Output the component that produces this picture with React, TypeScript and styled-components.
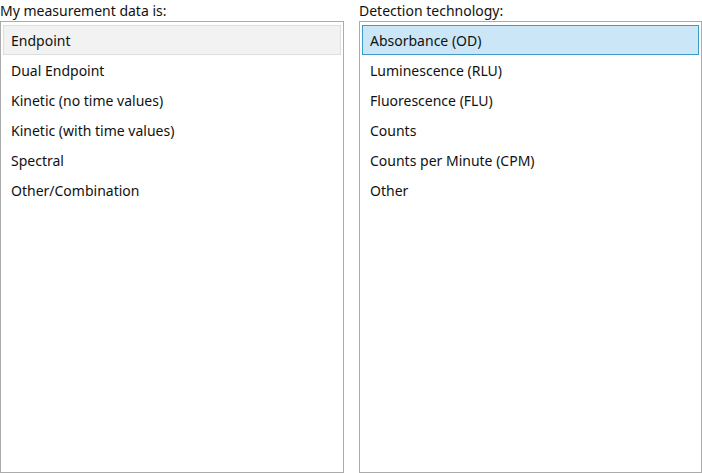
import React from "react";
import styled, { createGlobalStyle } from "styled-components";

const Global = createGlobalStyle`
  html, body { margin: 0; padding: 0; background: #ffffff; }
  body { font-family: "Noto Sans", "Open Sans", "DejaVu Sans", sans-serif; }
`;

const Page = styled.div`
  width: 702px;
  height: 473px;
  display: grid;
  grid-template-columns: 344px 343px;
  column-gap: 15px;
  overflow: hidden;
`;

const Column = styled.div`
  display: flex;
  flex-direction: column;
  min-height: 0;
`;

const Label = styled.div`
  height: 29px;
  margin-top: -8px;
  display: flex;
  align-items: flex-end;
  font-size: 14px;
  line-height: 21px;
  color: #111111;
  white-space: nowrap;
`;

const ListBox = styled.div`
  flex: 1;
  border: 1px solid #ababab;
  background: #ffffff;
  padding: 3px 2px;
  display: flex;
  flex-direction: column;
`;

const Item = styled.div<{ $sel?: "gray" | "blue" }>`
  height: 30px;
  box-sizing: border-box;
  display: flex;
  align-items: center;
  padding-left: 7px;
  font-size: 14px;
  color: #111111;
  border: 1px solid
    ${(p) => (p.$sel === "blue" ? "#3d9bc8" : p.$sel === "gray" ? "#dedede" : "transparent")};
  background: ${(p) => (p.$sel === "blue" ? "#cbe6f6" : p.$sel === "gray" ? "#f2f2f2" : "transparent")};
`;

const left = [
  "Endpoint",
  "Dual Endpoint",
  "Kinetic (no time values)",
  "Kinetic (with time values)",
  "Spectral",
  "Other/Combination",
];
const right = [
  "Absorbance (OD)",
  "Luminescence (RLU)",
  "Fluorescence (FLU)",
  "Counts",
  "Counts per Minute (CPM)",
  "Other",
];

export default function App() {
  return (
    <>
      <Global />
      <Page>
        <Column>
          <Label>My measurement data is:</Label>
          <ListBox>
            {left.map((t, i) => (
              <Item key={t} $sel={i === 0 ? "gray" : undefined}>
                {t}
              </Item>
            ))}
          </ListBox>
        </Column>
        <Column>
          <Label>Detection technology:</Label>
          <ListBox>
            {right.map((t, i) => (
              <Item key={t} $sel={i === 0 ? "blue" : undefined}>
                {t}
              </Item>
            ))}
          </ListBox>
        </Column>
      </Page>
    </>
  );
}
